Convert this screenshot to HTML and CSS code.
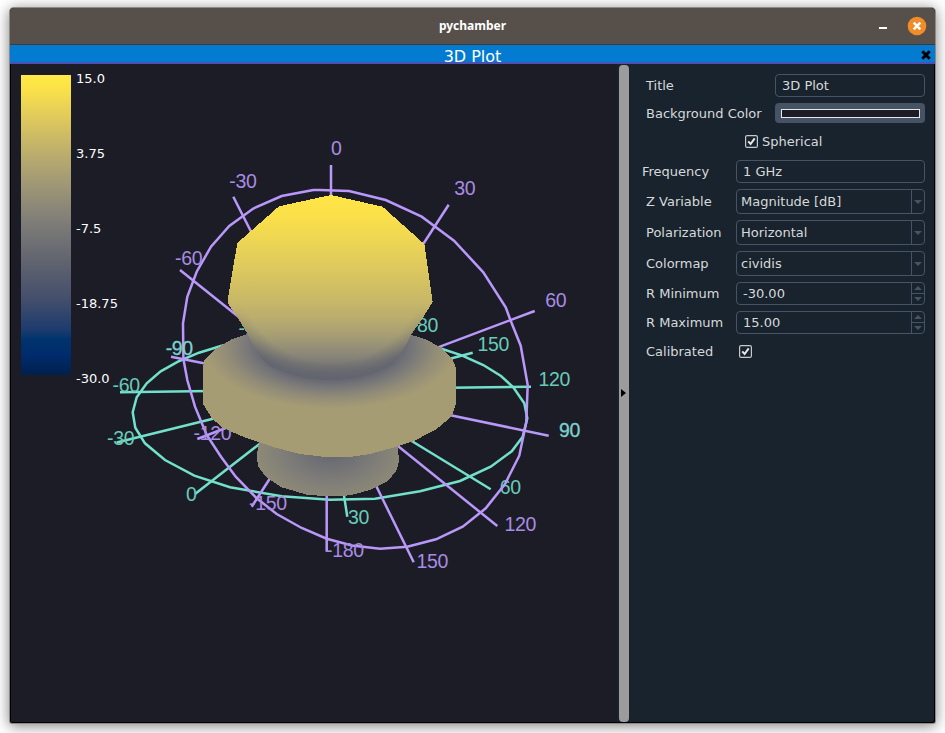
FILE: index.html
```html
<!DOCTYPE html>
<html lang="en">
<head>
<meta charset="utf-8">
<title>pychamber</title>
<link rel="stylesheet" href="styles.css">
</head>
<body>
<div class="window">
  <header class="titlebar">
    <span class="app-name">pychamber</span>
    <div class="window-buttons">
      <svg class="minimize" width="8" height="2"><rect width="8" height="2" fill="#fff"/></svg>
      <svg class="close" width="20" height="20" viewBox="0 0 20 20"><circle cx="10" cy="10" r="9.3" fill="#f28c28"/><path d="M6.7 6.7l6.6 6.6M13.3 6.7l-6.6 6.6" stroke="#fff" stroke-width="2.5"/></svg>
    </div>
  </header>
  <div class="dock-title">
    <span>3D Plot</span>
    <svg class="dock-close" width="10" height="10" viewBox="0 0 10 10"><path d="M1.3 1.3l7.4 7.4M8.7 1.3L1.3 8.7" stroke="#000" stroke-width="3"/></svg>
  </div>
  <main class="content">
    <svg class="plot" width="606" height="658" viewBox="11 64 606 658">
      <defs>
        <linearGradient id="scale" x1="0" y1="0" x2="0" y2="1">
          <stop offset="0" stop-color="#ffe945"/><stop offset=".04" stop-color="#fde346"/>
          <stop offset=".12" stop-color="#e6cf58"/><stop offset=".25" stop-color="#bfb06b"/>
          <stop offset=".37" stop-color="#9e9676"/><stop offset=".5" stop-color="#7c7b78"/>
          <stop offset=".62" stop-color="#61646f"/><stop offset=".75" stop-color="#434e6c"/>
          <stop offset=".85" stop-color="#1c3b6e"/><stop offset=".88" stop-color="#00336e"/>
          <stop offset=".93" stop-color="#002c6d"/><stop offset="1" stop-color="#00204c"/>
        </linearGradient>
        <linearGradient id="bulb" gradientUnits="userSpaceOnUse" x1="0" y1="195" x2="0" y2="379">
          <stop offset="0" stop-color="#ffe545"/><stop offset=".12" stop-color="#fae04a"/>
          <stop offset=".35" stop-color="#e2cd5b"/><stop offset=".55" stop-color="#cbba66"/>
          <stop offset=".66" stop-color="#bbae6e"/><stop offset=".75" stop-color="#a9a073"/>
          <stop offset=".87" stop-color="#8a8678"/><stop offset="1" stop-color="#62646f"/>
        </linearGradient>
        <radialGradient id="bulbEdge" gradientUnits="userSpaceOnUse" cx="0" cy="0" r="1" gradientTransform="translate(331 270) scale(114 113)">
          <stop offset=".82" stop-color="#62646f" stop-opacity="0"/><stop offset="1" stop-color="#62646f"/>
        </radialGradient>
        <linearGradient id="fade" gradientUnits="userSpaceOnUse" x1="0" y1="308" x2="0" y2="358">
          <stop offset="0" stop-color="#000"/><stop offset="1" stop-color="#fff"/>
        </linearGradient>
        <mask id="lower" maskUnits="userSpaceOnUse" x="200" y="190" width="260" height="200"><rect x="200" y="190" width="260" height="200" fill="url(#fade)"/></mask>
        <radialGradient id="disc" gradientUnits="userSpaceOnUse" cx="0" cy="0" r="1" gradientTransform="translate(331 346) scale(132 65)">
          <stop offset=".5" stop-color="#62646f"/><stop offset=".62" stop-color="#767679"/>
          <stop offset=".8" stop-color="#938d77"/><stop offset=".97" stop-color="#a69c74"/>
        </radialGradient>
        <radialGradient id="base" gradientUnits="userSpaceOnUse" cx="0" cy="0" r="1" gradientTransform="translate(331 448) scale(80 56)">
          <stop offset=".2" stop-color="#6b6c73"/><stop offset=".55" stop-color="#7c7b78"/><stop offset="1" stop-color="#918c77"/>
        </radialGradient>
      </defs>

      <rect x="21" y="75" width="50" height="300" fill="url(#scale)"/>
      <g class="scale-labels">
        <text x="76" y="83">15.0</text>
        <text x="76" y="158">3.75</text>
        <text x="76" y="233">-7.5</text>
        <text x="76" y="308">-18.75</text>
        <text x="76" y="383">-30.0</text>
      </g>

      <g class="azimuth">
        <path d="M440 348.3L461.7 355.3 483.3 365 501 376 513.3 387.3 524.3 403.3 527.3 418.3 522.7 436.7 511.7 451.3 490.7 466.7 460 481 420 491.3 375 498.7 330 499.7 281.7 496.3 230 487.3 194.3 475.7 165 460 145 443.3 135.3 427.7 132.7 412.3 136.7 397.3 146.7 383.3 160.7 371.3 179.3 361 199 352.7 221.7 345.7 250 339"/>
        <path d="M120 392.3L210 391M116.7 442.5L215 418.3M195 494L262 442M347.3 516.7L343.6 493M490.7 489.3L408 438.7M531 386.7L450 387.8M472.7 352.7L448 359.3"/>
      </g>
      <g class="azimuth-labels">
        <text x="112.5" y="392">-60</text><text x="107" y="444.5">-30</text>
        <text x="186" y="501">0</text><text x="348" y="524.3">30</text>
        <text x="499.7" y="494">60</text><text x="538.5" y="386.3">120</text>
        <text x="477.5" y="351.3">150</text><text x="417" y="332">80</text>
        <text x="238.5" y="334.5">-150</text>
      </g>
      <g class="elevation">
        <path d="M313.3 190L281.7 196 253.3 208.5 229.3 226 211 246.7 196.7 271.7 187.3 296.7 183 323.3 183.4 359 187.3 380 195 406.7 206.7 435 221 456.7 235.7 476.7 256.7 498.3 276.7 514 301.7 528 326.7 538.7 352 545.5 380 548.7 407.3 546.7 436 539.3 462.7 526.7 485.7 508.3 505 484 519.3 455.7 526.3 422 527.7 385 520.7 345.7 510.7 320.7 505.7 307.3 483.3 272.3 454 240.7 421.7 216.7 385.7 200 349 191 320 190z"/>
        <path d="M331 165V200M233.3 196.7L252 233.5M180 270L245 322M448.7 204.7L420 249M534.7 311L432 349.6M548.7 435.7L447 414.5M497.3 526L392 441.3M413.7 562.3L374 481.5M326.7 551.7V490M251.7 506.7L272 475.3M197.3 439L227 427.5M171 356.7L210 364.4"/>
      </g>
      <g class="elevation-labels">
        <text x="331" y="155">0</text><text x="454.3" y="195">30</text>
        <text x="229.3" y="188.3">-30</text><text x="175" y="265">-60</text>
        <text x="545.2" y="307.3">60</text><text x="193.5" y="440">-120</text>
        <text x="249" y="510">-150</text><text x="326" y="557">-180</text>
        <text x="416.5" y="568">150</text><text x="504.5" y="531">120</text>
      </g>
      <g class="shared-labels">
        <text x="165.7" y="355">-90</text><text x="559" y="437.3">90</text>
      </g>

      <g shape-rendering="crispEdges">
        <path fill="url(#base)" d="M259.3 440L256.7 456.7 258.3 466.7 266.7 477.7 281.7 487.3 306.7 494.7 330 496.5 350 495.3 370 490 386.7 481.7 396 471.7 399 461.7 397.3 440z"/>
        <path fill="url(#disc)" d="M248 334L231.7 339.3 215 349.3 204.3 360.7 203 368 203 404 211.7 418 221.7 427.3 243 436.7 276.7 448 300 454 330 457.5 350 457 370 454 392 448 413.3 441.3 436.7 429 452 416 456 403 456 368.3 452 358 440 347 425 339 411.7 335z"/>
        <path fill="url(#bulb)" d="M331 195L279 206.3 237.3 243 228 298 228.3 304 238 318 247 333Q260 360 270 366 298 380 331 380T390 366Q400 358 411 335L422 319 432.7 302 424.3 244 382.5 206.7z"/>
        <path fill="url(#bulbEdge)" mask="url(#lower)" d="M228 290L228.3 304 238 318 247 333Q260 360 270 366 298 380 331 380T390 366Q400 358 411 335L422 319 432.7 302 431 290z"/>
      </g>
    </svg>
    <div class="splitter"><svg width="5" height="8" viewBox="0 0 5 8"><path d="M0 0L5 4 0 8z" fill="#000"/></svg></div>
    <form class="settings">
      <div class="row"><label>Title</label><div class="field narrow">3D Plot</div></div>
      <div class="row color-row"><label>Background Color</label><div class="color-button"><span class="swatch"></span></div></div>
      <div class="row spherical"><svg class="check" width="13" height="13" viewBox="0 0 13 13"><rect x=".6" y=".6" width="11.8" height="11.8" rx="1.5"/><path d="M3.2 6.4L5.6 9 9.7 3.4"/></svg><span>Spherical</span></div>
      <div class="row frequency"><label>Frequency</label><div class="field">1 GHz</div></div>
      <div class="row tall"><label>Z Variable</label><div class="field combo"><span>Magnitude [dB]</span><i class="drop"><b class="down"></b></i></div></div>
      <div class="row tall"><label>Polarization</label><div class="field combo"><span>Horizontal</span><i class="drop"><b class="down"></b></i></div></div>
      <div class="row tall"><label>Colormap</label><div class="field combo"><span>cividis</span><i class="drop"><b class="down"></b></i></div></div>
      <div class="row"><label>R Minimum</label><div class="field spin"><span>-30.00</span><i class="steps"><em><b class="up"></b></em><em><b class="down"></b></em></i></div></div>
      <div class="row"><label>R Maximum</label><div class="field spin"><span>15.00</span><i class="steps"><em><b class="up"></b></em><em><b class="down"></b></em></i></div></div>
      <div class="row"><label>Calibrated</label><div class="check-cell"><svg class="check" width="13" height="13" viewBox="0 0 13 13"><rect x=".6" y=".6" width="11.8" height="11.8" rx="1.5"/><path d="M3.2 6.4L5.6 9 9.7 3.4"/></svg></div></div>
    </form>
  </main>
</div>
</body>
</html>
```
FILE: styles.css
```css
* { box-sizing: border-box; }
body {
  margin: 0;
  padding: 8px 10px 10px;
  height: 733px;
  overflow: hidden;
  background: #fff;
  font-family: "DejaVu Sans", sans-serif;
  font-size: 13px;
  color: #d6d9db;
}
.window {
  width: 925px;
  height: 715px;
  display: flex;
  flex-direction: column;
  border-radius: 4px 4px 2px 2px;
  background: #000;
  box-shadow: 0 0 0 1px #8d8b89, 0 2px 14px 1px rgba(0, 0, 0, .5);
}
.titlebar {
  height: 37px;
  display: grid;
  grid-template-columns: 1fr auto 1fr;
  align-items: center;
  background: #574f4a;
  border-bottom: 1px solid #403a36;
  border-radius: 4px 4px 0 0;
}
.app-name {
  grid-column: 2;
  padding-bottom: 1px;
  font: bold 12px "Noto Sans", sans-serif;
  color: #fff;
}
.window-buttons {
  display: flex;
  justify-content: flex-end;
  align-items: center;
  gap: 20px;
  padding-right: 8px;
}
.minimize { margin-top: 4px; }
.dock-title {
  height: 19px;
  display: grid;
  grid-template-columns: 1fr auto 1fr;
  align-items: center;
  background: #037bd0;
  border-bottom: 2px solid #4b50b8;
  font-size: 16px;
  line-height: 17px;
  color: #fff;
}
.dock-title span { grid-column: 2; padding-top: 3px; }
.dock-close { justify-self: end; margin: 0 4px 1px 0; }
.content {
  flex: 1;
  display: flex;
  margin: 0 1px 1px;
  background: #19232d;
  border-radius: 0 0 2px 2px;
}
.plot { display: block; background: #1c1c27; flex: none; }
.scale-labels { font-size: 13px; fill: #fff; }
.azimuth, .elevation { fill: none; stroke-width: 2.5; }
.azimuth { stroke: #72e0ca; }
.elevation { stroke: #b998fa; }
.azimuth-labels, .elevation-labels, .shared-labels {
  font-family: "Liberation Sans", sans-serif;
  font-size: 19.5px;
  letter-spacing: -.35px;
}
.azimuth-labels { fill: #68cbb8; }
.elevation-labels { fill: #a98be3; }
.shared-labels { fill: #7dd0cf; stroke: #7dd0cf; stroke-width: .3; }
.splitter {
  width: 10px;
  margin: 1px 0 0 2px;
  padding: 0 2px 2px 0;
  display: flex;
  align-items: center;
  justify-content: center;
  background: #9c9c9c;
  border-radius: 4px;
}
.settings {
  flex: 1;
  display: flex;
  flex-direction: column;
  gap: 6px;
  padding: 10px 9px 0 17px;
}
.row { height: 23px; display: flex; align-items: center; justify-content: space-between; }
.tall { height: 25px; }
.color-row { height: 20px; }
.field {
  width: 189px;
  height: 100%;
  display: flex;
  align-items: center;
  padding-left: 6px;
  border: 1px solid #455364;
  border-radius: 4px;
}
.field > span { flex: 1; }
.narrow { width: 150px; }
.combo { padding-left: 4px; }
.color-button {
  width: 150px;
  height: 20px;
  padding: 6px 5px 5px 6px;
  background: #455364;
  border-radius: 4px;
}
.swatch { display: block; height: 9px; border: 1px solid #e6e6e6; background: #1c1c27; }
.spherical {
  height: 18px;
  margin: 3px 0 4px;
  justify-content: flex-start;
  gap: 4.5px;
  padding-left: 98.5px;
}
.frequency { margin-left: -4px; }
.check { fill: none; stroke: #c5c9cc; stroke-width: 1.2; flex: none; }
.check path { stroke: #e6e8e9; stroke-width: 2; }
.check-cell { width: 189px; padding-left: 2.5px; display: flex; }
.drop {
  width: 13px;
  height: 100%;
  display: flex;
  align-items: center;
  justify-content: center;
  border-left: 1px solid #455364;
}
.steps { width: 13px; height: 100%; display: flex; flex-direction: column; border-left: 1px solid #455364; }
.steps em { flex: 1; display: flex; align-items: center; justify-content: center; }
.steps em + em { border-top: 1px solid #455364; }
.up, .down { width: 0; height: 0; border: 4px solid transparent; }
.up { border-width: 0 4px 4px; border-bottom-color: #455364; }
.down { border-width: 4px 4px 0; border-top-color: #455364; }
```
